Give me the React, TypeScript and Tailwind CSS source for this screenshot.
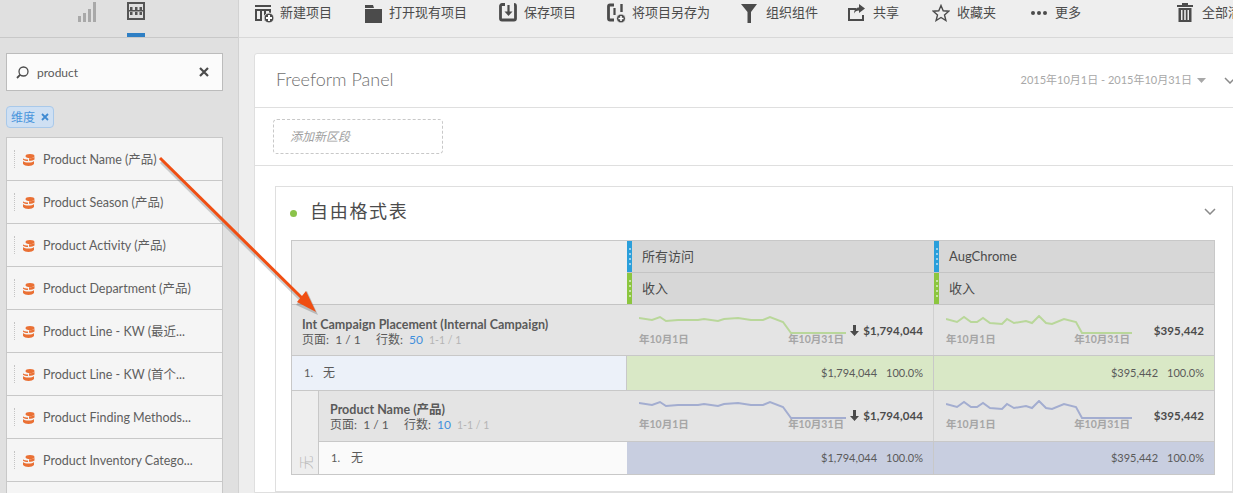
const font = { fontFamily: 'Lato, "Noto Sans CJK SC", sans-serif' };

const fieldItems = [
  "Product Name (产品)",
  "Product Season (产品)",
  "Product Activity (产品)",
  "Product Department (产品)",
  "Product Line - KW (最近...",
  "Product Line - KW (首个...",
  "Product Finding Methods...",
  "Product Inventory Catego...",
  "",
];

const spark1 =
  "0,3 13,5 21,2 27,6 39,5 49,5 59,5 65,4 79,6 85,4 99,3 112,5 124,5 131,2 144,7 152,18 207,18";
const spark2 =
  "0,4 11,7 18,2 25,7 31,7 37,3 44,8 56,9 61,4 68,8 80,6 86,8 93,1 100,8 106,9 118,4 130,7 136,18 186,18";

function ToolIcon({ name }: { name: string }) {
  if (name === "new")
    return (
      <svg width="20" height="20" viewBox="0 0 20 20" fill="#4b4b4b">
        <rect x="0" y="2" width="16" height="2" />
        <path d="M0 6h16v4h-2V8h-3v10H9V8H7v10H0V6zm2 2v8h3V8H2z" fillRule="evenodd" />
        <circle cx="14" cy="15" r="5" stroke="#eeeeee" />
        <path d="M13 12h2v2h2v2h-2v2h-2v-2h-2v-2h2z" fill="#fff" />
      </svg>
    );
  if (name === "open")
    return (
      <svg width="20" height="20" viewBox="0 0 20 20" fill="#4b4b4b">
        <path d="M1 2h8l1 3h8v15H1z" />
        <rect x="1" y="5" width="18" height="1" fill="#eeeeee" />
      </svg>
    );
  if (name === "save")
    return (
      <svg width="18" height="19" viewBox="0 0 18 19" fill="none" stroke="#4b4b4b" strokeWidth="2.800">
        <path d="M6 1.500H3a1.500 1.500 0 0 0-1.500 1.500v12.500a1.500 1.500 0 0 0 1.500 1.500h12a1.500 1.500 0 0 0 1.500-1.500V3A1.500 1.500 0 0 0 15 1.500" />
        <path d="M9.500 2v8" strokeWidth="2.200" />
        <path d="M5.500 8.500h8L9.500 13z" fill="#4b4b4b" stroke="none" />
      </svg>
    );
  if (name === "saveas")
    return (
      <svg width="20" height="20" viewBox="0 0 20 20" fill="none" stroke="#4b4b4b" strokeWidth="2.800">
        <path d="M7 2H3a1.500 1.500 0 0 0-1.500 1.500v12A1.500 1.500 0 0 0 3 17h4" />
        <path d="M7.500 5v7" strokeWidth="2.200" />
        <path d="M14.500 1v8" strokeWidth="2.400" />
        <circle cx="14" cy="15.500" r="4.500" fill="#4b4b4b" stroke="#eeeeee" strokeWidth="1" />
        <path d="M14 13v5M11.500 15.500h5" stroke="#fff" strokeWidth="1.600" />
      </svg>
    );
  if (name === "filter")
    return (
      <svg width="17" height="20" viewBox="0 0 17 20" fill="#4b4b4b">
        <path d="M0 1h16l-6 8v11H6.500V9z" />
      </svg>
    );
  if (name === "share")
    return (
      <svg width="18" height="18" viewBox="0 0 18 18" fill="#4b4b4b">
        <path d="M0 4h8v2H2v9h12v-4h2v6H0z" />
        <path d="M11 0l6 4.500-6 4.500V6.500c-2.500 0-4 1-5 3 .2-3.500 2-6 5-6z" />
      </svg>
    );
  if (name === "star")
    return (
      <svg width="18" height="18" viewBox="0 0 18 18" fill="none" stroke="#4b4b4b" strokeWidth="1.400">
        <path d="M9 1.500l2.200 5.300 5.600.4-4.300 3.700 1.400 5.600L9 13.500l-4.900 3 1.400-5.600-4.300-3.700 5.600-.4z" />
      </svg>
    );
  if (name === "more")
    return (
      <svg width="18" height="6" viewBox="0 0 18 6" fill="#4b4b4b">
        <circle cx="3" cy="3" r="2" />
        <circle cx="9" cy="3" r="2" />
        <circle cx="15" cy="3" r="2" />
      </svg>
    );
  return (
    <svg width="16" height="19" viewBox="0 0 16 19" fill="#4b4b4b">
      <path d="M5 0h6v2h5v2H0V2h5z" />
      <path d="M1.500 5h13v14h-13zM4 7v10h1.500V7zm3.200 0v10h1.600V7zm3.300 0v10H12V7z" fillRule="evenodd" />
    </svg>
  );
}

function ToolItem({ icon, label, className }: { icon: string; label: string; className: string }) {
  return (
    <div className={`flex items-center flex-none ${className}`}>
      <div className="w-[25px] flex-none flex items-center">
        <ToolIcon name={icon} />
      </div>
      <span className="text-[13px] text-[#4b4b4b] whitespace-nowrap">{label}</span>
    </div>
  );
}

function DimensionIcon() {
  return (
    <svg width="12" height="12" viewBox="0 0 12 12" fill="#ea7034" className="block mt-[1px]">
      <ellipse cx="7" cy="2" rx="4.500" ry="2" />
      <path d="M0 4.200c1 1 3 1.300 5 1.300v1.600c-2 0-4-.5-5-1.300z" />
      <path d="M6 4.300c2.500 0 4.500-.5 5.500-1.300v2.400c-1 .9-3 1.300-5.500 1.300z" />
      <path d="M0 7c1 1 3 1.500 5.500 1.500S10 8 11 7v3c-1 1.300-3 2-5.500 2S1 11.300 0 10z" />
    </svg>
  );
}

function ColorBar({ color }: { color: string }) {
  return (
    <div className={`w-[5px] flex-none flex flex-col items-center justify-center gap-[3px] ${color}`}>
      <div className="w-[2px] h-[2px] rounded-full bg-white/70" />
      <div className="w-[2px] h-[2px] rounded-full bg-white/70" />
      <div className="w-[2px] h-[2px] rounded-full bg-white/70" />
      <div className="w-[2px] h-[2px] rounded-full bg-white/70" />
    </div>
  );
}

function HeaderCell({ color, label }: { color: string; label: string }) {
  return (
    <div className="flex bg-[#d7d7d7] border-b border-[#c4c4c4]">
      <ColorBar color={color} />
      <span className="pl-[10px] pt-[1px] text-[13px] text-[#4b4b4b] self-center">{label}</span>
    </div>
  );
}

function SummaryCell({
  points,
  width,
  stroke,
  value,
  down,
  border,
  nested,
}: {
  points: string;
  width: number;
  stroke: string;
  value: string;
  down?: boolean;
  border?: boolean;
  nested?: boolean;
}) {
  return (
    <div className={`flex items-start justify-between bg-[#e4e4e4] pl-[12px] pr-[10px] ${nested ? "pt-[9px]" : "pt-[10px]"} ${border ? "border-r border-[#d0d0d0]" : ""}`}>
      <div className="flex-none" style={{ width }}>
        <svg width={width} height="20" className="block">
          <polyline points={points} fill="none" stroke={stroke} strokeWidth="2" />
        </svg>
        <div className="flex justify-between pr-[3px] -mt-[3px] text-[10.500px] leading-[14px] font-bold text-[#a6a6a6]">
          <span>年10月1日</span>
          <span>年10月31日</span>
        </div>
      </div>
      <div className="flex items-center gap-[4px] mt-[7px] text-[11.500px] tracking-[0.100px] font-bold text-[#4b4b4b] whitespace-nowrap">
        {down && (
          <svg width="9" height="11" viewBox="0 0 9 11" fill="#4b4b4b">
            <path d="M3 0h3v6h3l-4.500 5L0 6h3z" />
          </svg>
        )}
        {value}
      </div>
    </div>
  );
}

function ValueCell({ value, color, border }: { value: string; color: string; border?: boolean }) {
  return (
    <div className={`flex items-center justify-end gap-[9px] pr-[10px] text-[11px] text-[#5a5a5a] ${color} ${border ? "border-r border-[#c8c8c8]" : ""}`}>
      <span>{value}</span>
      <span>100.0%</span>
    </div>
  );
}

function Pager({ rows }: { rows: string }) {
  return (
    <div className="text-[12px] leading-[15px] text-[#5a5a5a] whitespace-nowrap">
      页面:&nbsp; 1 / 1 &nbsp;&nbsp;&nbsp; 行数: <span className="ml-[3px] text-[#3f8fdc]">{rows}</span>
      <span className="ml-[6px] text-[#b4b4b4] text-[10.500px]">1-1 / 1</span>
    </div>
  );
}

export default function App() {
  return (
    <div className="relative w-[1233px] h-[493px] overflow-hidden flex bg-[#eeeeee]" style={font}>
      {/* Left rail */}
      <aside className="w-[239px] flex-none bg-[#e0e0e0] border-r border-[#d2d2d2] flex flex-col overflow-hidden">
        <div className="h-[38px] flex-none border-b border-[#c8c8c8] flex items-start pl-[78px] gap-[31px]">
          <svg width="18" height="20" viewBox="0 0 18 20" fill="#a9a9a9" className="mt-[2px]">
            <rect x="0" y="14" width="3" height="6" />
            <rect x="5" y="11" width="3" height="9" />
            <rect x="10" y="7" width="3" height="13" />
            <rect x="15" y="0" width="3" height="20" />
          </svg>
          <div className="w-[18px] h-[37px] flex flex-col justify-between">
            <svg width="18" height="18" viewBox="0 0 18 18" fill="#555555" className="mt-[2px]">
              <path d="M0 0h18v18H0zm2 2v14h14V2z" fillRule="evenodd" />
              <rect x="2" y="8" width="14" height="1.500" />
              <rect x="3" y="5" width="2.500" height="3" />
              <rect x="8" y="5" width="2.500" height="3" />
              <rect x="12.500" y="5" width="2.500" height="3" />
              <rect x="3" y="10" width="2.500" height="3" />
              <rect x="8" y="10" width="2.500" height="3" />
              <rect x="12.500" y="10" width="2.500" height="3" />
            </svg>
            <div className="h-[4px] bg-[#2f7fc4]" />
          </div>
        </div>

        <div className="ml-[6px] mt-[15px] w-[217px] h-[38px] flex-none bg-[#fbfbfb] border border-[#bcbcbc] flex items-center pl-[9px] pr-[13px]">
          <svg width="13" height="13" viewBox="0 0 13 13" fill="none" stroke="#4b4b4b" strokeWidth="1.300" className="mt-[1px]">
            <circle cx="7.500" cy="5.500" r="4.500" />
            <path d="M4.300 8.700L1 12" strokeWidth="1.800" />
          </svg>
          <span className="ml-[8px] pt-[2px] text-[12px] text-[#5a5a5a] flex-1">product</span>
          <svg width="10" height="10" viewBox="0 0 10 10" stroke="#4b4b4b" strokeWidth="2.200">
            <path d="M1 1l8 8M9 1l-8 8" />
          </svg>
        </div>

        <div className="ml-[6px] mt-[15px] w-[48px] h-[22px] flex-none bg-[#cfe0f3] border border-[#a9c9ea] rounded-[4px] flex items-center pl-[4px] gap-[6px]">
          <span className="pt-[1px] text-[12px] text-[#4a95dc]">维度</span>
          <svg width="8" height="8" viewBox="0 0 8 8" stroke="#3f8ad2" strokeWidth="1.800">
            <path d="M1 1l6 6M7 1L1 7" />
          </svg>
        </div>

        <div className="ml-[6px] mt-[9px] w-[217px] flex-none border border-[#c8c8c8] border-b-0 bg-[#f5f5f5]">
          {fieldItems.map((item, i) => (
            <div key={i} className={`h-[43px] flex items-center pl-[7px] ${i < fieldItems.length - 1 ? "border-b border-[#c8c8c8]" : ""}`}>
              {item && (
                <>
                  <div className="h-[18px] border-l border-dotted border-[#c4c4c4]" />
                  <div className="ml-[8px] mr-[8px]">
                    <DimensionIcon />
                  </div>
                  <span className="text-[12.500px] text-[#5f5f5f] whitespace-nowrap pt-[3px]">{item}</span>
                </>
              )}
            </div>
          ))}
        </div>
      </aside>

      <div className="flex-1 min-w-0 flex flex-col">
        {/* Toolbar */}
        <div className="h-[38px] flex-none border-b border-[#d8d8d8] flex items-start pt-[3px] pl-[16px]">
          <ToolItem icon="new" label="新建项目" className="w-[109px]" />
          <ToolItem icon="open" label="打开现有项目" className="w-[135px]" />
          <ToolItem icon="save" label="保存项目" className="w-[108px]" />
          <ToolItem icon="saveas" label="将项目另存为" className="w-[134px]" />
          <ToolItem icon="filter" label="组织组件" className="w-[107px]" />
          <ToolItem icon="share" label="共享" className="w-[84px]" />
          <ToolItem icon="star" label="收藏夹" className="w-[98px]" />
          <ToolItem icon="more" label="更多" className="w-[147px]" />
          <ToolItem icon="trash" label="全部清除" className="w-[80px]" />
        </div>

        {/* Panel */}
        <div className="pl-[15px] pt-[15px] flex-1 min-h-0 overflow-hidden">
          <div className="w-[1000px] bg-white border border-[#dfdfdf] rounded-tl-[3px]">
            <div className="h-[54px] border-b border-[#dfdfdf] flex items-center pl-[21px]">
              <span className="text-[18px] font-light text-[#6f6f6f] flex-1 -mt-[2px]">Freeform Panel</span>
              <span className="text-[11px] text-[#a8a8a8] whitespace-nowrap">2015年10月1日 - 2015年10月31日</span>
              <svg width="9" height="5" viewBox="0 0 9 5" fill="#a8a8a8" className="ml-[5px]">
                <path d="M0 0h9L4.500 5z" />
              </svg>
              <svg width="12" height="7" viewBox="0 0 12 7" fill="none" stroke="#8a8a8a" strokeWidth="1.500" className="ml-[18px] mr-[17px]">
                <path d="M1 1l5 5 5-5" />
              </svg>
            </div>
            <div className="h-[58px] border-b border-[#dfdfdf] flex items-center pl-[18px]">
              <div className="w-[170px] h-[35px] border border-dashed border-[#c8c8c8] rounded-[4px] flex items-center pl-[16px] text-[12px] italic text-[#a0a0a0]">
                添加新区段
              </div>
            </div>

            {/* Freeform table card */}
            <div className="ml-[20px] mt-[20px] mr-[20px] h-[306px] border border-[#dfdfdf] px-[15px]">
              <div className="h-[53px] flex items-center">
                <div className="w-[7px] h-[7px] rounded-full bg-[#8bc34a] -ml-[1px]" />
                <span className="ml-[13px] -mt-[4px] text-[18px] tracking-[1.700px] text-[#4b4b4b] flex-1">自由格式表</span>
                <svg width="12" height="7" viewBox="0 0 12 7" fill="none" stroke="#8a8a8a" strokeWidth="1.500" className="-mt-[4px] mr-[1px]">
                  <path d="M1 1l5 5 5-5" />
                </svg>
              </div>

              <div className="w-[924px] border border-b-0 border-[#c8c8c8] grid grid-cols-[335px_307px_280px] grid-rows-[32px_32px_51px_34px_52px_33px]">
                <div className="row-span-2 bg-[#eeeeee] border-b border-[#c4c4c4]" />
                <HeaderCell color="bg-[#2a9fdb]" label="所有访问" />
                <HeaderCell color="bg-[#2a9fdb]" label="AugChrome" />
                <HeaderCell color="bg-[#8cc63f]" label="收入" />
                <HeaderCell color="bg-[#8cc63f]" label="收入" />

                <div className="bg-[#e4e4e4] border-b border-[#c8c8c8] pl-[10px] pt-[12px]">
                  <div className="text-[12.500px] leading-[15px] font-bold text-[#5a5a5a] whitespace-nowrap">
                    Int Campaign Placement (Internal Campaign)
                  </div>
                  <Pager rows="50" />
                </div>
                <div className="border-b border-[#c8c8c8] grid">
                  <SummaryCell points={spark1} width={208} stroke="#b9d79a" value="$1,794,044" down border />
                </div>
                <div className="border-b border-[#c8c8c8] grid">
                  <SummaryCell points={spark2} width={187} stroke="#b9d79a" value="$395,442" />
                </div>

                <div className="bg-[#ecf1f9] border-r border-[#c8c8c8] flex items-center pl-[12px] text-[12px] text-[#5a5a5a]">
                  <span className="w-[19px] text-[11px]">1.</span>无
                </div>
                <ValueCell value="$1,794,044" color="bg-[#d9e8c6]" border />
                <ValueCell value="$395,442" color="bg-[#d9e8c6]" />

                <div className="row-span-2 flex border-t border-b border-[#c8c8c8]">
                  <div className="w-[27px] flex-none bg-[#eeeeee] border-r border-[#c8c8c8] flex items-end justify-center pb-[1px]">
                    <span className="-rotate-90 text-[14px] text-[#b8b8b8] font-light">无</span>
                  </div>
                  <div className="flex-1 flex flex-col">
                    <div className="h-[51px] flex-none bg-[#e4e4e4] border-b border-[#c8c8c8] pl-[11px] pt-[11px]">
                      <div className="text-[12.500px] leading-[15px] font-bold text-[#5a5a5a]">Product Name (产品)</div>
                      <Pager rows="10" />
                    </div>
                    <div className="flex-1 bg-[#fafafa] flex items-center pl-[12px] text-[12px] text-[#5a5a5a]">
                      <span className="w-[20px] text-[11px]">1.</span>无
                    </div>
                  </div>
                </div>
                <div className="border-t border-b border-[#c8c8c8] grid">
                  <SummaryCell points={spark1} width={208} stroke="#a3add0" value="$1,794,044" down border nested />
                </div>
                <div className="border-t border-b border-[#c8c8c8] grid">
                  <SummaryCell points={spark2} width={187} stroke="#a3add0" value="$395,442" nested />
                </div>
                <div className="border-b border-[#c8c8c8] grid">
                  <ValueCell value="$1,794,044" color="bg-[#c8cee0]" border />
                </div>
                <div className="border-b border-[#c8c8c8] grid">
                  <ValueCell value="$395,442" color="bg-[#c8cee0]" />
                </div>
              </div>
            </div>
          </div>
        </div>
      </div>

      {/* Annotation arrow over the page */}
      <svg width="1233" height="493" className="absolute inset-0 pointer-events-none">
        <path d="M160 160L302 300" stroke="#777777" strokeOpacity="0.35" strokeWidth="3" transform="translate(1 2)" />
        <path d="M296 305L318 315L307 291z" fill="#777777" fillOpacity="0.4" />
        <path d="M160 158L304 300" stroke="#f04e12" strokeWidth="3" />
        <path d="M297 302L316 312L306 291z" fill="#f04e12" />
      </svg>
    </div>
  );
}
